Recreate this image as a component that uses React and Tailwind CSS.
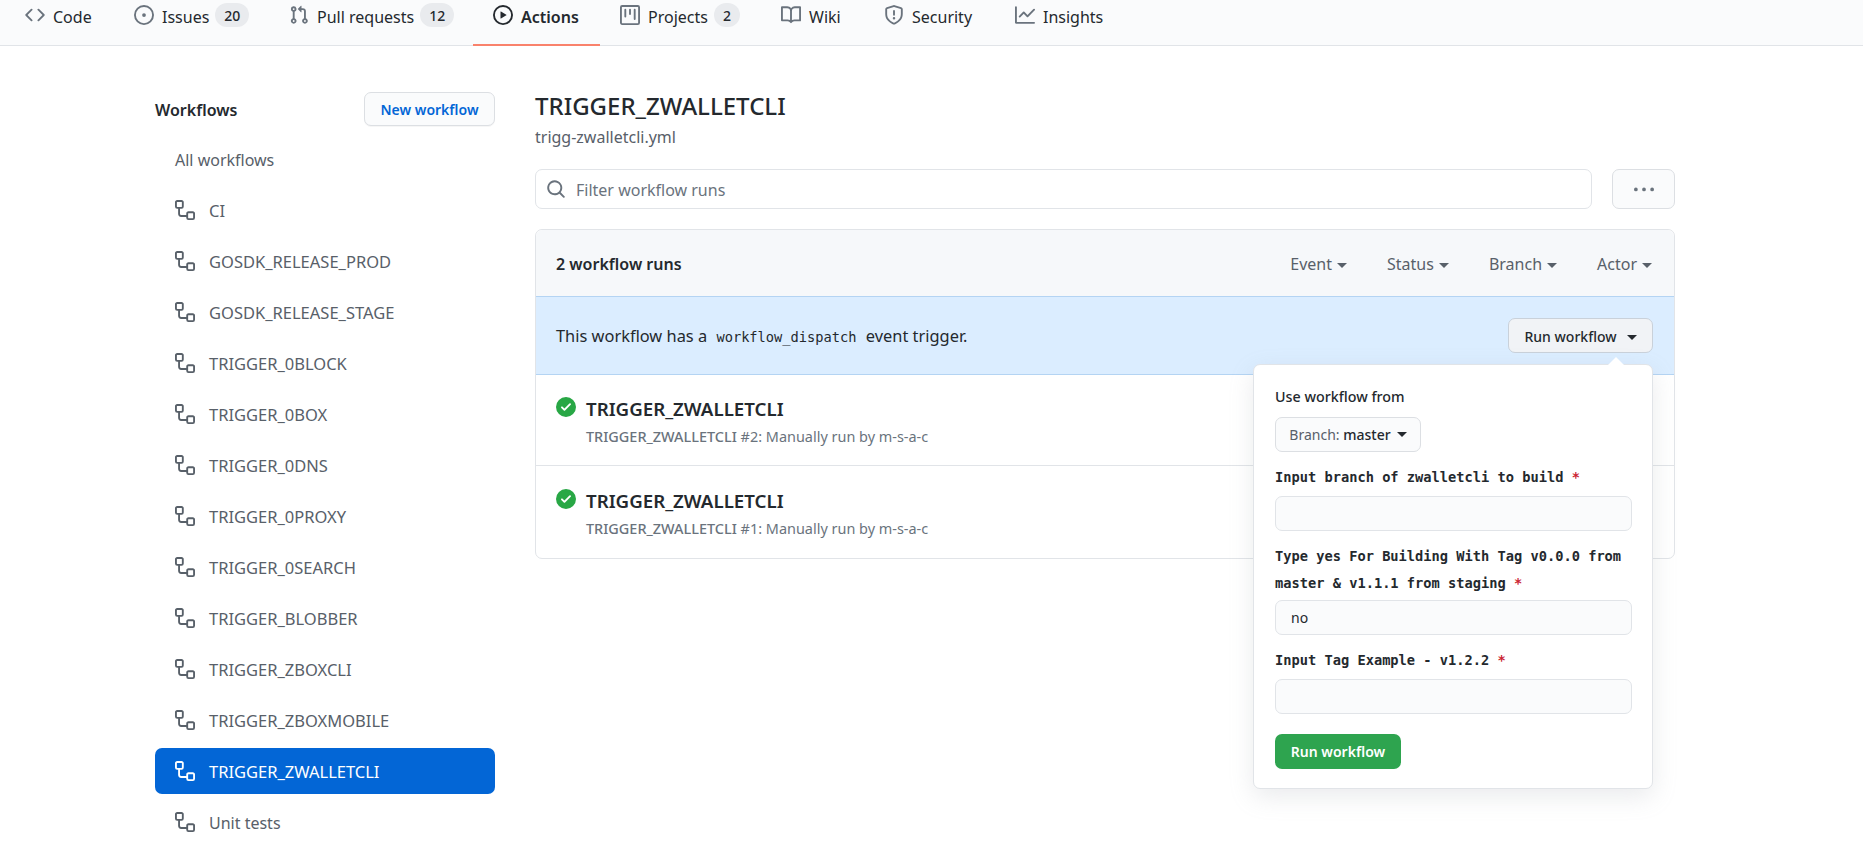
import React from "react";

const PATHS = {
  code: "M4.72 3.22a.75.75 0 011.06 1.06L2.06 8l3.72 3.72a.75.75 0 11-1.06 1.06L.47 8.53a.75.75 0 010-1.06l4.25-4.25zm6.56 0a.75.75 0 10-1.06 1.06L13.94 8l-3.72 3.72a.75.75 0 101.06 1.06l4.25-4.25a.75.75 0 000-1.06l-4.25-4.25z",
  issue: "M8 9.5a1.5 1.5 0 100-3 1.5 1.5 0 000 3zM8 0a8 8 0 100 16A8 8 0 008 0zM1.5 8a6.5 6.5 0 1113 0 6.5 6.5 0 01-13 0z",
  pull: "M7.177 3.073L9.573.677A.25.25 0 0110 .854v4.792a.25.25 0 01-.427.177L7.177 3.427a.25.25 0 010-.354zM3.75 2.5a.75.75 0 100 1.5.75.75 0 000-1.5zm-2.25.75a2.25 2.25 0 113 2.122v5.256a2.251 2.251 0 11-1.5 0V5.372A2.25 2.25 0 011.5 3.25zM11 2.5h-1V4h1a1 1 0 011 1v5.628a2.251 2.251 0 101.5 0V5A2.5 2.5 0 0011 2.5zm1 10.25a.75.75 0 111.5 0 .75.75 0 01-1.5 0zM3.75 12a.75.75 0 100 1.5.75.75 0 000-1.5z",
  play: "M1.5 8a6.5 6.5 0 1113 0 6.5 6.5 0 01-13 0zM8 0a8 8 0 100 16A8 8 0 008 0zM6.379 5.227A.25.25 0 006 5.442v5.117a.25.25 0 00.379.214l4.264-2.559a.25.25 0 000-.428L6.379 5.227z",
  project: "M1.75 0A1.75 1.75 0 000 1.75v12.5C0 15.216.784 16 1.75 16h12.5A1.75 1.75 0 0016 14.25V1.75A1.75 1.75 0 0014.25 0H1.75zM1.5 1.75a.25.25 0 01.25-.25h12.5a.25.25 0 01.25.25v12.5a.25.25 0 01-.25.25H1.75a.25.25 0 01-.25-.25V1.75zM11.75 3a.75.75 0 00-.75.75v7.5a.75.75 0 001.5 0v-7.5a.75.75 0 00-.75-.75zm-8.25.75a.75.75 0 011.5 0v5.5a.75.75 0 01-1.5 0v-5.5zM8 3a.75.75 0 00-.75.75v3.5a.75.75 0 001.5 0v-3.5A.75.75 0 008 3z",
  book: "M0 1.75A.75.75 0 01.75 1h4.253c1.227 0 2.317.59 3 1.501A3.744 3.744 0 0111.006 1h4.245a.75.75 0 01.75.75v10.5a.75.75 0 01-.75.75h-4.507a2.25 2.25 0 00-1.591.659l-.622.621a.75.75 0 01-1.06 0l-.622-.621A2.25 2.25 0 005.258 13H.75a.75.75 0 01-.75-.75V1.75zm8.755 3a2.25 2.25 0 012.25-2.25H14.5v9h-3.757c-.71 0-1.4.201-1.992.572l.004-7.322zm-1.504 7.324l.004-5.073-.002-2.253A2.25 2.25 0 005.003 2.5H1.5v9h3.757a3.75 3.75 0 011.994.574z",
  shield: "M7.467.133a1.75 1.75 0 011.066 0l5.25 1.68A1.75 1.75 0 0115 3.48V7c0 1.566-.32 3.182-1.303 4.682-.983 1.498-2.585 2.813-5.032 3.855a1.7 1.7 0 01-1.33 0c-2.447-1.042-4.049-2.357-5.032-3.855C1.32 10.182 1 8.566 1 7V3.48a1.75 1.75 0 011.217-1.667l5.25-1.68zm.61 1.429a.25.25 0 00-.153 0l-5.25 1.68a.25.25 0 00-.174.238V7c0 1.358.275 2.666 1.057 3.86.784 1.194 2.121 2.34 4.366 3.297a.2.2 0 00.154 0c2.245-.956 3.582-2.104 4.366-3.298C13.225 9.666 13.5 8.36 13.5 7V3.48a.25.25 0 00-.174-.237l-5.25-1.68zM9 10.5a1 1 0 11-2 0 1 1 0 012 0zm-.25-5.75a.75.75 0 10-1.5 0v3a.75.75 0 001.5 0v-3z",
  graph: "M1.5 1.75a.75.75 0 00-1.5 0v12.5c0 .414.336.75.75.75h14.5a.75.75 0 000-1.5H1.5V1.75zm14.28 2.53a.75.75 0 00-1.06-1.06L10 7.94 7.53 5.47a.75.75 0 00-1.06 0L3.22 8.72a.75.75 0 001.06 1.06L7 7.06l2.47 2.47a.75.75 0 001.06 0l5.25-5.25z",
  workflow: "M0 1.75C0 .784.784 0 1.75 0h3.5C6.216 0 7 .784 7 1.75v3.5A1.75 1.75 0 015.25 7H4v4a1 1 0 001 1h4v-1.25C9 9.784 9.784 9 10.75 9h3.5c.966 0 1.75.784 1.75 1.75v3.5A1.75 1.75 0 0114.25 16h-3.5A1.75 1.75 0 019 14.25V13.5H5A2.5 2.5 0 012.5 11V7h-.75A1.75 1.75 0 010 5.25v-3.5zm1.75-.25a.25.25 0 00-.25.25v3.5c0 .138.112.25.25.25h3.5a.25.25 0 00.25-.25v-3.5a.25.25 0 00-.25-.25h-3.5zm9 9a.25.25 0 00-.25.25v3.5c0 .138.112.25.25.25h3.5a.25.25 0 00.25-.25v-3.5a.25.25 0 00-.25-.25h-3.5z",
  search: "M11.5 7a4.499 4.499 0 11-8.998 0A4.499 4.499 0 0111.5 7zm-.82 4.74a6 6 0 111.06-1.06l3.04 3.04a.75.75 0 11-1.06 1.06l-3.04-3.04z",
  check: "M8 16A8 8 0 108 0a8 8 0 000 16zm3.78-9.72a.75.75 0 00-1.06-1.06L6.75 9.19 5.28 7.72a.75.75 0 00-1.06 1.06l2 2a.75.75 0 001.06 0l4.5-4.5z",
  kebab: "M8 9a1.5 1.5 0 100-3 1.5 1.5 0 000 3zM1.5 9a1.5 1.5 0 100-3 1.5 1.5 0 000 3zm13 0a1.5 1.5 0 100-3 1.5 1.5 0 000 3z",
};

function Octicon({ name, className }) {
  return (
    <svg viewBox="0 0 16 16" fill="currentColor" fillRule="evenodd" className={className}>
      <path d={PATHS[name]} />
    </svg>
  );
}

function Caret({ className }) {
  return (
    <span className={`inline-block h-0 w-0 border-x-[5px] border-t-[5px] border-x-transparent border-t-current ${className}`} />
  );
}

const tabs = [
  { icon: "code", label: "Code", width: "w-[109px]" },
  { icon: "issue", label: "Issues", count: 20, width: "w-[155px]" },
  { icon: "pull", label: "Pull requests", count: 12, width: "w-[204px]" },
  { icon: "play", label: "Actions", width: "w-[127px]", active: true },
  { icon: "project", label: "Projects", count: 2, width: "w-[161px]" },
  { icon: "book", label: "Wiki", width: "w-[103px]" },
  { icon: "shield", label: "Security", width: "w-[131px]" },
  { icon: "graph", label: "Insights", width: "w-[135px]" },
];

const workflows = [
  "CI",
  "GOSDK_RELEASE_PROD",
  "GOSDK_RELEASE_STAGE",
  "TRIGGER_0BLOCK",
  "TRIGGER_0BOX",
  "TRIGGER_0DNS",
  "TRIGGER_0PROXY",
  "TRIGGER_0SEARCH",
  "TRIGGER_BLOBBER",
  "TRIGGER_ZBOXCLI",
  "TRIGGER_ZBOXMOBILE",
  "TRIGGER_ZWALLETCLI",
  "Unit tests",
];

function TabBar() {
  return (
    <nav className="flex h-[46px] border-b border-[#e1e4e8] bg-[#fafbfc] pl-[5px]">
      {tabs.map((tab) => (
        <div
          key={tab.label}
          className={`flex h-[46px] shrink-0 items-center gap-2 border-b-2 pb-[14px] pl-5 ${tab.width} ${
            tab.active ? "border-[#f9826c] font-semibold text-[#24292e]" : "border-transparent text-[#24292e]"
          }`}
        >
          <Octicon name={tab.icon} className={`size-5 shrink-0 ${tab.active ? "text-[#24292e]" : "text-[#6a737d]"}`} />
          <span className="mt-[3px] text-[16px] leading-5">{tab.label}</span>
          {tab.count && (
            <span className="ml-[-2px] flex h-6 items-center rounded-full bg-[#e9ebee] px-[9px] text-[14px] font-medium">
              {tab.count}
            </span>
          )}
        </div>
      ))}
    </nav>
  );
}

function Sidebar() {
  return (
    <aside className="w-[340px] shrink-0">
      <div className="flex h-[34px] items-center justify-between">
        <h2 className="pt-[2px] text-[16px] font-semibold text-[#24292e]">Workflows</h2>
        <button className="h-[34px] w-[131px] rounded-[7px] border border-[#dcdfe3] bg-[#fafbfc] text-[14px] font-semibold text-[#0366d6] shadow-[0_1px_0_rgba(27,31,35,0.04)]">
          New workflow
        </button>
      </div>
      <ul className="mt-[10px] flex flex-col gap-[5px] text-[16px]">
        <li className="flex h-[46px] items-center pt-[2px] pl-5 text-[#586069]">All workflows</li>
        {workflows.map((name) => {
          const selected = name === "TRIGGER_ZWALLETCLI";
          return (
            <li
              key={name}
              className={`flex h-[46px] items-center gap-[14px] rounded-[7px] pl-5 ${
                selected ? "bg-[#0366d6] text-white" : "text-[#586069]"
              }`}
            >
              <Octicon name="workflow" className="size-5 shrink-0" />
              <span className={`pt-[2px] ${name === "Unit tests" ? "text-[16px]" : "text-[16.5px]"}`}>{name}</span>
            </li>
          );
        })}
      </ul>
    </aside>
  );
}

function FieldLabel({ children }) {
  return (
    <label className="block font-['DejaVu_Sans_Mono',monospace] text-[13.7px] leading-[27px] font-bold text-[#24292e]">
      {children} <span className="text-[#cb2431]">*</span>
    </label>
  );
}

function FieldInput({ value }) {
  return (
    <div className="flex h-[35px] items-center rounded-[7px] border border-[#e1e4e8] bg-[#fafbfc] pl-[15px] text-[14px] text-[#24292e]">
      {value}
    </div>
  );
}

function RunPopover() {
  return (
    <div className="absolute top-[46px] right-0 z-10 w-[400px] rounded-[7px] border border-[#e1e4e8] bg-white pt-[22px] pr-5 pb-[19px] pl-[21px] shadow-[0_8px_24px_rgba(149,157,165,0.2)]">
      <span className="absolute -top-2 right-[28px] h-0 w-0 border-x-[8px] border-b-[8px] border-x-transparent border-b-white" />
      <p className="text-[14.3px] leading-5 font-medium text-[#24292e]">Use workflow from</p>
      <div className="mt-[10px] flex h-[35px] w-[146px] items-center justify-center gap-[6px] rounded-[7px] border border-[#dcdfe3] bg-[#fafbfc] text-[14px] text-[#24292e]">
        <span>
          <span className="text-[#586069]">Branch:</span> <span className="font-medium">master</span>
        </span>
        <Caret className="text-[#24292e]" />
      </div>
      <div className="mt-3">
        <FieldLabel>Input branch of zwalletcli to build</FieldLabel>
        <div className="mt-[5px]">
          <FieldInput />
        </div>
      </div>
      <div className="mt-3">
        <FieldLabel>Type yes For Building With Tag v0.0.0 from master &amp; v1.1.1 from staging</FieldLabel>
        <div className="mt-[3px]">
          <FieldInput value="no" />
        </div>
      </div>
      <div className="mt-3">
        <FieldLabel>Input Tag Example - v1.2.2</FieldLabel>
        <div className="mt-[5px]">
          <FieldInput />
        </div>
      </div>
      <button className="mt-5 h-[35px] w-[126px] rounded-[7px] bg-[#2ea44f] text-[14px] font-semibold text-white">
        Run workflow
      </button>
    </div>
  );
}

function RunRow({ number, last }) {
  return (
    <div className={`flex ${last ? "h-[92px] pt-[23px]" : "h-[91px] border-b border-[#e1e4e8] pt-[22px]"} pl-5`}>
      <Octicon name="check" className="size-5 shrink-0 text-[#28a745]" />
      <div className="ml-[10px]">
        <div className="text-[18.7px] leading-6 font-semibold text-[#24292e]">TRIGGER_ZWALLETCLI</div>
        <div className="mt-[6px] text-[14.45px] leading-5 text-[#6a737d]">
          <span className="font-medium">TRIGGER_ZWALLETCLI</span> #{number}: Manually run by m-s-a-c
        </div>
      </div>
    </div>
  );
}

function Content() {
  return (
    <main className="w-[1140px] shrink-0">
      <h1 className="text-[24px] leading-[28px] font-medium text-[#24292e]">TRIGGER_ZWALLETCLI</h1>
      <p className="mt-[5px] text-[16px] leading-6 text-[#586069]">trigg-zwalletcli.yml</p>

      <div className="mt-5 flex gap-5">
        <div className="flex h-10 flex-1 items-center gap-[10px] rounded-[7px] border border-[#e1e4e8] bg-white pl-[10px] text-[16px] text-[#6a737d]">
          <Octicon name="search" className="size-5 text-[#6a737d]" />
          <span className="pt-[2px]">Filter workflow runs</span>
        </div>
        <button className="flex h-10 w-[63px] items-center justify-center rounded-[7px] border border-[#dcdfe3] bg-[#fafbfc] text-[#6a737d]">
          <Octicon name="kebab" className="mt-[2px] size-5" />
        </button>
      </div>

      <section className="mt-5 rounded-[7px] border border-[#e1e4e8]">
        <header className="flex h-[66px] items-center justify-between rounded-t-[7px] bg-[#f6f8fa] pt-[2px] pr-[22px] pl-5">
          <span className="text-[16px] font-semibold text-[#24292e]">2 workflow runs</span>
          <div className="flex items-center gap-[40px] text-[16px] text-[#586069]">
            {["Event", "Status", "Branch", "Actor"].map((filter) => (
              <span key={filter} className="flex items-center gap-[5px]">
                {filter}
                <Caret className="mt-[2px]" />
              </span>
            ))}
          </div>
        </header>
        <div className="flex h-[79px] items-center justify-between border-y border-[#b4d4f3] bg-[#dbedff] pr-[21px] pl-5">
          <p className="pt-[2px] text-[16.4px] text-[#24292e]">
            This workflow has a{" "}
            <code className="mx-[5px] font-['DejaVu_Sans_Mono',monospace] text-[13.7px]">workflow_dispatch</code> event trigger.
          </p>
          <div className="relative">
            <button className="flex h-[35px] w-[145px] items-center justify-center gap-[10px] rounded-[7px] border border-[#c9d1da] bg-[#f1f3f6] pt-[2px] text-[14px] font-medium text-[#24292e]">
              Run workflow
              <Caret className="mt-[2px]" />
            </button>
            <RunPopover />
          </div>
        </div>
        <RunRow number={2} />
        <RunRow number={1} last />
      </section>
    </main>
  );
}

export default function App() {
  return (
    <div className="h-[864px] overflow-hidden bg-white font-['Noto_Sans',sans-serif]">
      <TabBar />
      <div className="flex gap-10 pt-[46px] pl-[155px]">
        <Sidebar />
        <Content />
      </div>
    </div>
  );
}
